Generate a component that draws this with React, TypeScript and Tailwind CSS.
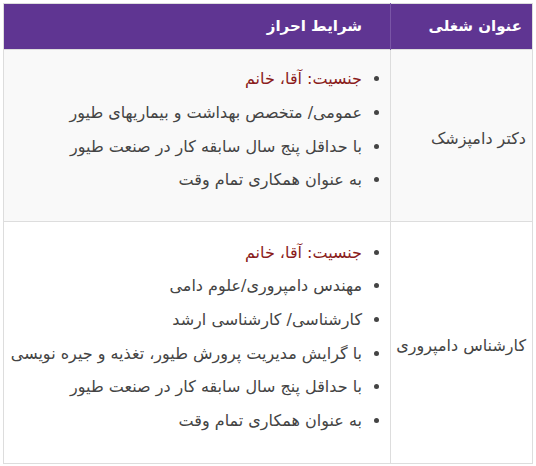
const ROWS = [
  {
    title: "دکتر دامپزشک",
    items: [
      "جنسیت: آقا، خانم",
      "عمومی/ متخصص بهداشت و بیماریهای طیور",
      "با حداقل پنج سال سابقه کار در صنعت طیور",
      "به عنوان همکاری تمام وقت",
    ],
    bg: "bg-[#f9f9f9] h-[172px]",
  },
  {
    title: "کارشناس دامپروری",
    items: [
      "جنسیت: آقا، خانم",
      "مهندس دامپروری/علوم دامی",
      "کارشناسی/ کارشناسی ارشد",
      "با گرایش مدیریت پرورش طیور، تغذیه و جیره نویسی",
      "با حداقل پنج سال سابقه کار در صنعت طیور",
      "به عنوان همکاری تمام وقت",
    ],
    bg: "bg-white h-[242px]",
  },
];

export default function App() {
  return (
    <div
      dir="rtl"
      className="w-[536px] h-[466px] bg-white p-[3px] text-[#444] text-[16px]"
      style={{ fontFamily: '"DejaVu Sans", sans-serif' }}
    >
      <table className="w-[530px] border-collapse border border-[#dddddd]">
        <thead>
          <tr className="bg-[#5f3592] text-white h-[46px]">
            <th className="w-[142px] border-l border-[#7a55a6] text-right pr-[10px] font-bold text-[15px]">
              عنوان شغلی
            </th>
            <th className="text-right pr-[28px] font-bold text-[15px]">شرایط احراز</th>
          </tr>
        </thead>
        <tbody>
          {ROWS.map((row) => (
            <tr key={row.title} className={`${row.bg} border-t border-[#dddddd]`}>
              <td className="border-l border-[#dddddd] pr-[6px] pt-[6px] align-middle">{row.title}</td>
              <td className="pt-[12px] pb-[12px] pr-[14px] align-middle">
                <ul className="list-disc pr-[14px] mb-[12px] leading-[33.6px]">
                  {row.items.map((it, i) => (
                    <li key={i}>
                      <span className={i === 0 ? "text-[#8a1c1c]" : ""}>{it}</span>
                    </li>
                  ))}
                </ul>
              </td>
            </tr>
          ))}
        </tbody>
      </table>
    </div>
  );
}
